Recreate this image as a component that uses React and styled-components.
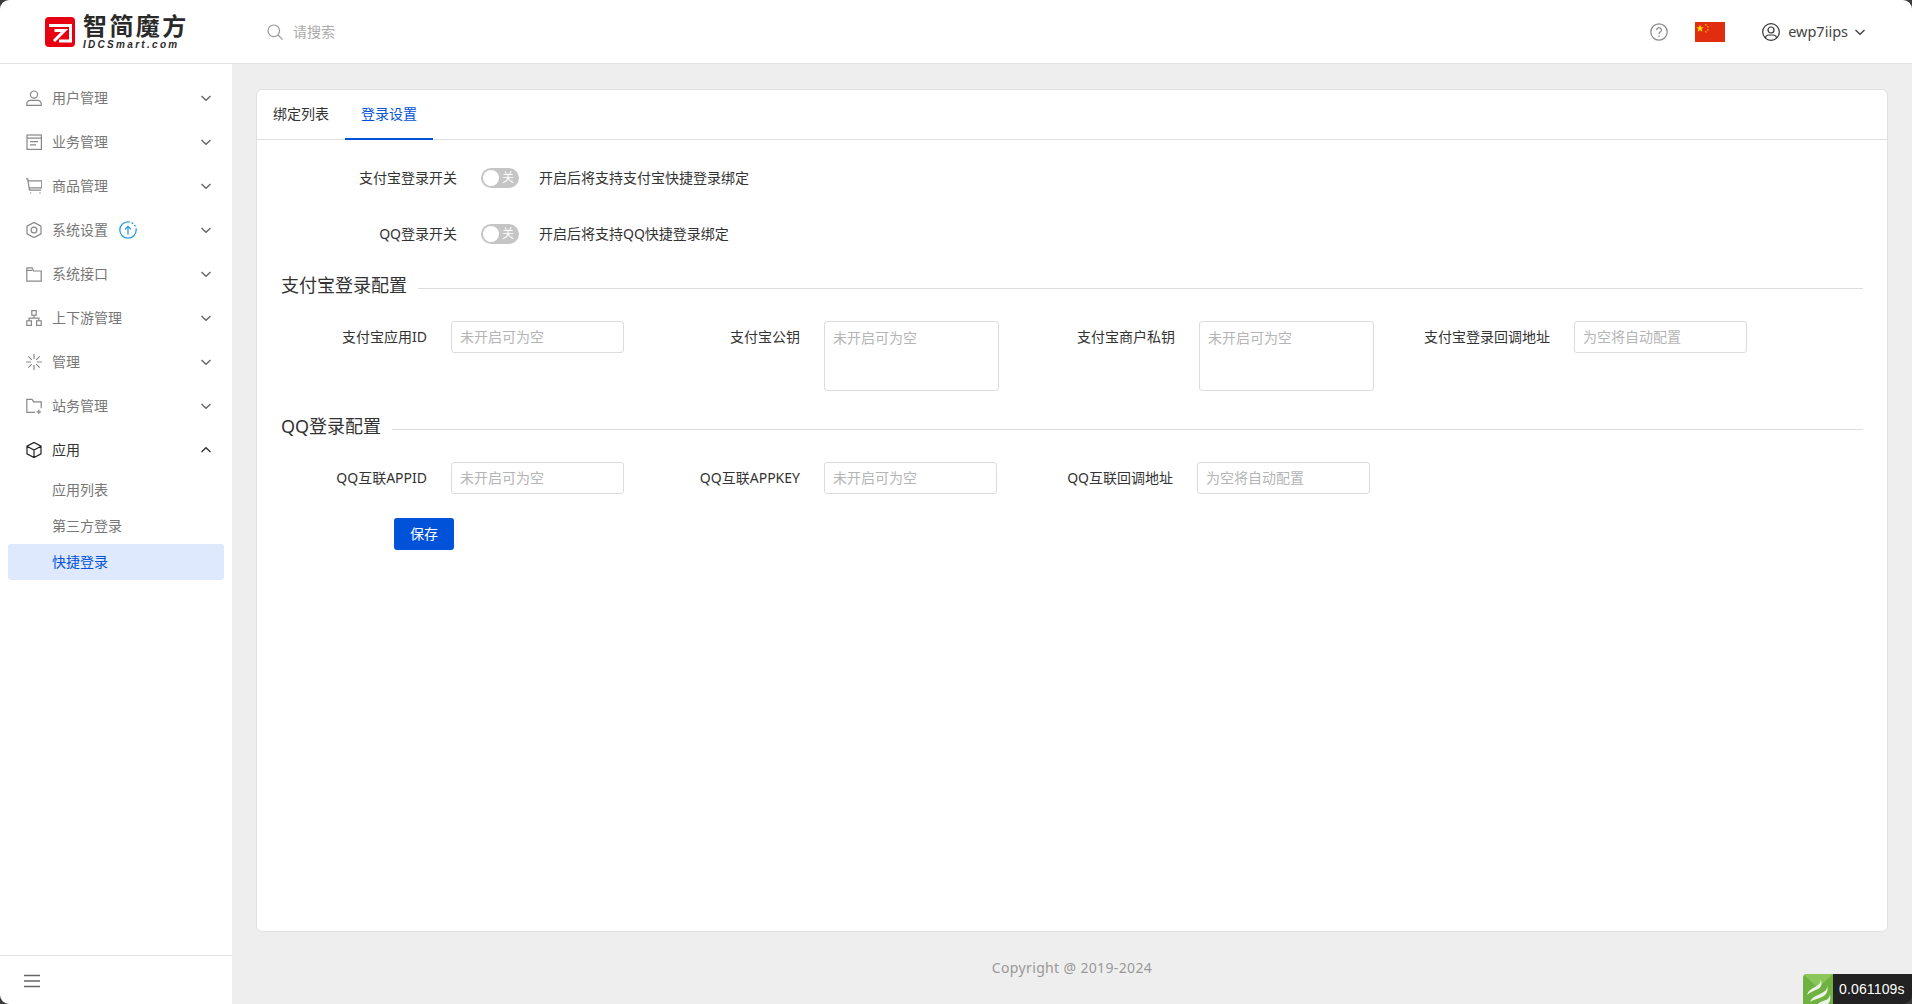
import React from "react";
import styled, { createGlobalStyle } from "styled-components";

const Global = createGlobalStyle`
  html, body { margin: 0; padding: 0; height: 100%; overflow: hidden; }
  body { font-family: "Noto Sans", "Noto Sans CJK SC", sans-serif; font-size: 14px; color: #333; background: #eee; }
  * { box-sizing: border-box; }
`;

const Page = styled.div`display: flex; flex-direction: column; height: 100vh;`;
const Header = styled.header`
  display: flex; align-items: center; height: 64px; flex: none;
  background: #fff; border-bottom: 1px solid #e3e3e3;
  padding: 0 44px 0 45px;
`;
const Logo = styled.div`display: flex; align-items: center; gap: 8px; width: 222px; flex: none;`;
const LogoWords = styled.div`display: flex; flex-direction: column; font-family: "Noto Sans CJK SC", sans-serif;`;
const LogoName = styled.span`font-size: 24px; font-weight: 700; line-height: 24px; color: #2a2a2a; white-space: nowrap; letter-spacing: 2.4px;`;
const LogoDomain = styled.span`
  font-family: "Liberation Sans", sans-serif; font-size: 10px; font-weight: 700; font-style: italic;
  line-height: 10px; letter-spacing: 2.3px; color: #2a2a2a; margin-top: 3px; white-space: nowrap;
`;
const Search = styled.div`display: flex; align-items: center; gap: 10px; flex: 1; color: #aaa;`;
const SearchText = styled.span`padding-bottom: 2px;`;
const HeaderRight = styled.div`display: flex; align-items: center;`;
const Flag = styled.svg`display: block; margin: 0 37px 0 27px;`;
const UserName = styled.span`margin: 0 4px 0 8px; padding-bottom: 2px; font-size: 14.5px; color: #444;`;

const Body = styled.div`display: flex; flex: 1; min-height: 0;`;
const Sidebar = styled.aside`width: 232px; flex: none; display: flex; flex-direction: column; background: #fff;`;
const Menu = styled.nav`flex: 1; padding-top: 12px;`;
const MenuItem = styled.div`
  display: flex; align-items: center; height: 44px; padding: 0 18px 0 26px;
  color: ${p => (p.$open ? "#333" : "#777")};
`;
const MenuLabel = styled.span`margin-left: 10px; padding-bottom: 2px;`;
const MenuSpacer = styled.span`flex: 1;`;
const UpdateIcon = styled.svg`margin-left: 11px;`;
const SubItem = styled.div`
  display: flex; align-items: center; height: 36px; margin: 0 8px; padding: 0 0 2px 44px; border-radius: 3px;
  color: ${p => (p.$active ? "#0052d9" : "#777")};
  background: ${p => (p.$active ? "#dfe9fd" : "transparent")};
`;
const SideFoot = styled.div`
  height: 49px; flex: none; display: flex; align-items: center; padding: 2px 0 0 24px; border-top: 1px solid #e3e3e3;
`;

const Main = styled.main`flex: 1; min-width: 0; display: flex; flex-direction: column; padding: 25px 24px 0; background: #eee;`;
const Card = styled.section`flex: 1; background: #fff; border: 1px solid #e0e0e0; border-radius: 6px;`;
const Tabs = styled.div`display: flex; height: 50px; padding-left: 0; border-bottom: 1px solid #e0e0e0;`;
const Tab = styled.div`
  height: 50px; padding: 0 16px 2px; display: flex; align-items: center;
  color: ${p => (p.$active ? "#0052d9" : "#333")};
  border-bottom: 2px solid ${p => (p.$active ? "#0052d9" : "transparent")};
`;
const Form = styled.form`padding-top: 22px; padding-right: 24px;`;
const SwitchRow = styled.div`display: flex; align-items: center; height: 32px; margin-bottom: 24px;`;
const SwitchLabel = styled.label`width: 224px; padding: 0 24px 2px 0; text-align: right; color: #333; flex: none;`;
const Switch = styled.span`
  position: relative; display: inline-flex; align-items: center; justify-content: flex-end;
  width: 38px; height: 20px; padding-right: 5px; border-radius: 10px; background: #c5c5c5;
  color: #fff; font-size: 12px; line-height: 20px; flex: none;
`;
const Knob = styled.span`position: absolute; left: 2px; top: 2px; width: 16px; height: 16px; border-radius: 50%; background: #fff;`;
const SwitchHint = styled.span`margin-left: 20px; padding-bottom: 2px; color: #333;`;
const SectionTitle = styled.div`
  display: flex; align-items: center; gap: 11px; margin-left: 24px; height: 26px; margin-top: ${p => p.$mt || 0}px;
  font-size: 18px; line-height: 26px; color: #333; white-space: nowrap;
  &::after { content: ""; flex: 1; height: 1px; background: #ddd; margin-top: 7px; }
`;
const FieldRow = styled.div`
  display: flex; align-items: flex-start; gap: 6px;
  margin: ${p => p.$mt}px 0 ${p => p.$mb}px;
`;
const Field = styled.div`display: flex; align-items: flex-start; flex: none;`;
const FieldLabel = styled.label`
  width: 194px; padding-right: 24px; text-align: right; line-height: 31px; color: #333; white-space: nowrap;
`;
const inputBase = `
  font-family: "Noto Sans", "Noto Sans CJK SC", sans-serif; font-size: 14px; color: #333;
  border: 1px solid #dcdcdc; border-radius: 3px; padding: 0 8px; background: #fff; outline: none; display: block;
  &::placeholder { color: #b5b5b5; opacity: 1; }
`;
const Input = styled.input`${inputBase} width: ${p => p.$w || 173}px; height: 32px; padding-bottom: 2px;`;
const Area = styled.textarea`${inputBase} width: ${p => p.$w || 175}px; height: 70px; padding: 5px 8px; line-height: 22px; resize: none;`;
const Save = styled.button`
  display: block; width: 60px; height: 32px; margin-left: 137px; border: 0; border-radius: 3px;
  background: #0052d9; color: #fff; font-family: inherit; font-size: 14px; padding: 0 0 2px;
`;
const Copyright = styled.footer`height: 72px; flex: none; display: flex; align-items: center; justify-content: center; padding-bottom: 2px; color: #999; font-size: 14px; letter-spacing: 0.35px;`;

const Timer = styled.div`
  position: fixed; right: 0; bottom: 0; height: 30px; display: flex; align-items: stretch; z-index: 5;
`;
const TimerLogo = styled.svg`display: block; border-top-left-radius: 4px;`;
const TimerText = styled.div`
  width: 79px; background: #222; color: #fff; font-size: 14px; line-height: 30px; padding-left: 6px;
  font-family: "Liberation Sans", sans-serif; letter-spacing: 0.15px;
`;
const Corners = styled.div`
  position: fixed; inset: 0; border-radius: 9px; box-shadow: 0 0 0 16px #3a3a3a; pointer-events: none; z-index: 10;
`;

const Ic = ({ children, size = 16, color = "#888", sw = 1.2 }) => (
  <svg width={size} height={size} viewBox="0 0 16 16" fill="none" stroke={color} strokeWidth={sw} style={{ display: "block", flex: "none" }}>
    {children}
  </svg>
);
const Chevron = ({ up, color = "#666" }) => (
  <Ic color={color} sw={1.4}><path d={up ? "M3.5 10 8 5.8 12.5 10" : "M3.5 6 8 10.2 12.5 6"} /></Ic>
);

const icons = {
  user: <><circle cx="8" cy="4.6" r="3.6" /><path d="M.8 15.4v-1.6a3.4 3.4 0 0 1 3.4-3.4h7.600a3.4 3.4 0 0 1 3.4 3.4v1.6z" /></>,
  article: <><rect x="1" y="1" width="14.400" height="14.400" /><path d="M1 4.2h14.400M4 7.600h8M4 10.800h6" /></>,
  cart: <><path d="M-.5 .8h2.200l1.800 11.400h11.500M2.200 2.800H15.800v7H3.300" /><path d="M4.600 14.400v1.100M14 14.400v1.100" strokeWidth="1.400" /></>,
  setting: <><path d="M8 .4l7 3.800v7.600l-7 3.800-7-3.800V4.200z" /><circle cx="8" cy="8" r="2.900" /></>,
  folder: <><path d="M.8 1.800V15.200h14.400V5H7.600L6 1.800H.8" /><path d="M.8 4.400h5.600" /></>,
  tree: <><rect x="5.800" y=".6" width="4.400" height="4.600" /><rect x=".8" y="10.800" width="4.600" height="4.600" /><rect x="10.600" y="10.800" width="4.600" height="4.600" /><path d="M8 5.200v3M3.100 10.800V8.200h9.800v2.600" /></>,
  loading: <path d="M8 0v5M8 11v5M0 8h5M11 8h5M2.300 2.300l3.500 3.500M10.200 10.200l3.500 3.500M2.300 13.700l3.500-3.500M10.200 5.800l3.500-3.500" />,
  add: <path d="M9 14.300H.8V1.300h5.200l1.600 2.500h7.600v6.400M12.800 11.500v4.500M10.500 13.800H15" />,
  cube: <path d="M8 .4l7 3.800v7.600l-7 3.800-7-3.800V4.200zM1 4.200L8 8l7-3.800M8 8v7.600" />,
};

const menu = [
  ["user", "用户管理"], ["article", "业务管理"], ["cart", "商品管理"], ["setting", "系统设置", true],
  ["folder", "系统接口"], ["tree", "上下游管理"], ["loading", "管理"], ["add", "站务管理"],
];

function FormField({ label, hint, kind, w }) {
  return (
    <Field>
      <FieldLabel>{label}</FieldLabel>
      {kind === "area" ? <Area placeholder={hint} $w={w} readOnly /> : <Input placeholder={hint} $w={w} readOnly />}
    </Field>
  );
}

export default function App() {
  return (
    <Page>
      <Global />
      <Header>
        <Logo>
          <svg width="30" height="30" viewBox="0 0 30 30" style={{ flex: "none" }}>
            <rect width="30" height="30" rx="4" fill="#e60012" />
            <path d="M4 8.500h21.500v15.500H14" fill="none" stroke="#fff" strokeWidth="3" />
            <path d="M9.500 13.500H19.500L9 24" fill="none" stroke="#fff" strokeWidth="3" />
          </svg>
          <LogoWords>
            <LogoName>智简魔方</LogoName>
            <LogoDomain>IDCSmart.com</LogoDomain>
          </LogoWords>
        </Logo>
        <Search>
          <svg width="16" height="16" viewBox="0 0 16 16" fill="none" stroke="#999" strokeWidth="1.2">
            <circle cx="6.800" cy="6.800" r="5.800" /><path d="M11 11l4.600 4.600" />
          </svg>
          <SearchText>请搜索</SearchText>
        </Search>
        <HeaderRight>
          <svg width="18" height="18" viewBox="0 0 18 18" fill="none" stroke="#888" strokeWidth="1.2">
            <circle cx="9" cy="9" r="8.200" />
            <path d="M6.600 7a2.400 2.400 0 1 1 3.600 2.100c-.8.500-1.200 1-1.200 1.900" />
            <path d="M9 12.600v1.200" strokeWidth="1.400" />
          </svg>
          <Flag width="30" height="20" viewBox="0 0 30 20">
            <rect width="30" height="20" fill="#e02d10" />
            <path d="M5 2.600l1 2.600 2.800.1-2.200 1.700.8 2.700L5 8.200 2.600 9.700l.8-2.700L1.200 5.300l2.800-.1z" fill="#ffd400" />
            <rect x="10" y="2" width="1.500" height="1.500" fill="#f7a400" />
            <rect x="12" y="4" width="1.500" height="1.500" fill="#f7a400" />
            <rect x="12" y="7" width="1.500" height="1.500" fill="#f7a400" />
            <rect x="10" y="9" width="1.500" height="1.500" fill="#f7a400" />
          </Flag>
          <svg width="18" height="18" viewBox="0 0 18 18" fill="none" stroke="#333" strokeWidth="1.2">
            <circle cx="9" cy="9" r="8.300" /><circle cx="9" cy="7" r="3" /><path d="M3.400 15c.3-2 1.500-3 3.500-3h4.200c2 0 3.200 1 3.500 3" />
          </svg>
          <UserName>ewp7iips</UserName>
          <Chevron color="#444" />
        </HeaderRight>
      </Header>
      <Body>
        <Sidebar>
          <Menu>
            {menu.map(([ic, label, update]) => (
              <MenuItem key={label}>
                <Ic>{icons[ic]}</Ic>
                <MenuLabel>{label}</MenuLabel>
                {update && (
                  <UpdateIcon width="18" height="18" viewBox="0 0 18 18" fill="none" stroke="#2a9be6" strokeWidth="1.3">
                    <path d="M9 .8A8.200 8.200 0 1 0 17.200 9" />
                    <path d="M17.200 9A8.200 8.200 0 0 0 9 .8" strokeDasharray="1.800 1.800" />
                    <path d="M9 13.500V5.500M6 8.300L9 5.300l3 3" />
                  </UpdateIcon>
                )}
                <MenuSpacer />
                <Chevron />
              </MenuItem>
            ))}
            <MenuItem $open>
              <Ic color="#222">{icons.cube}</Ic>
              <MenuLabel>应用</MenuLabel>
              <MenuSpacer />
              <Chevron up color="#333" />
            </MenuItem>
            <SubItem>应用列表</SubItem>
            <SubItem>第三方登录</SubItem>
            <SubItem $active>快捷登录</SubItem>
          </Menu>
          <SideFoot>
            <Ic color="#666" sw={1.4}><path d="M0 2.500h16M0 8h16M0 13.500h16" /></Ic>
          </SideFoot>
        </Sidebar>
        <Main>
          <Card>
            <Tabs>
              <Tab>绑定列表</Tab>
              <Tab $active>登录设置</Tab>
            </Tabs>
            <Form>
              <SwitchRow>
                <SwitchLabel>支付宝登录开关</SwitchLabel>
                <Switch><Knob />关</Switch>
                <SwitchHint>开启后将支持支付宝快捷登录绑定</SwitchHint>
              </SwitchRow>
              <SwitchRow>
                <SwitchLabel>QQ登录开关</SwitchLabel>
                <Switch><Knob />关</Switch>
                <SwitchHint>开启后将支持QQ快捷登录绑定</SwitchHint>
              </SwitchRow>
              <SectionTitle $mt={-2}>支付宝登录配置</SectionTitle>
              <FieldRow $mt={23} $mb={22}>
                <FormField label="支付宝应用ID" hint="未开启可为空" />
                <FormField label="支付宝公钥" hint="未开启可为空" kind="area" />
                <FormField label="支付宝商户私钥" hint="未开启可为空" kind="area" />
                <FormField label="支付宝登录回调地址" hint="为空将自动配置" />
              </FieldRow>
              <SectionTitle>QQ登录配置</SectionTitle>
              <FieldRow $mt={23} $mb={24}>
                <FormField label="QQ互联APPID" hint="未开启可为空" />
                <FormField label="QQ互联APPKEY" hint="未开启可为空" />
                <FormField label="QQ互联回调地址" hint="为空将自动配置" />
              </FieldRow>
              <Save type="button">保存</Save>
            </Form>
          </Card>
          <Copyright>Copyright @ 2019-2024</Copyright>
        </Main>
      </Body>
      <Timer>
        <TimerLogo width="30" height="30" viewBox="0 0 30 30">
          <rect width="30" height="30" fill="#6fb23f" />
          <path d="M0 0h30L15 14z" fill="#8bc65a" />
          <path d="M17 4c2 4-1 7-5 9-4 2-7 4-8 8 3-3 7-4 11-6 3-1.500 5-5 2-11z" fill="#eef3ea" />
          <path d="M24 11c1 5-3 7-7 9-4 2-8 3-10 8 4-3 8-3 12-5 4-2 7-6 5-12z" fill="#eef3ea" />
          <path d="M27 20c0 4-3 6-7 7-2 .5-4 1.500-5 3h10c2-2 3-6 2-10z" fill="#eef3ea" />
        </TimerLogo>
        <TimerText>0.061109s</TimerText>
      </Timer>
      <Corners />
    </Page>
  );
}
